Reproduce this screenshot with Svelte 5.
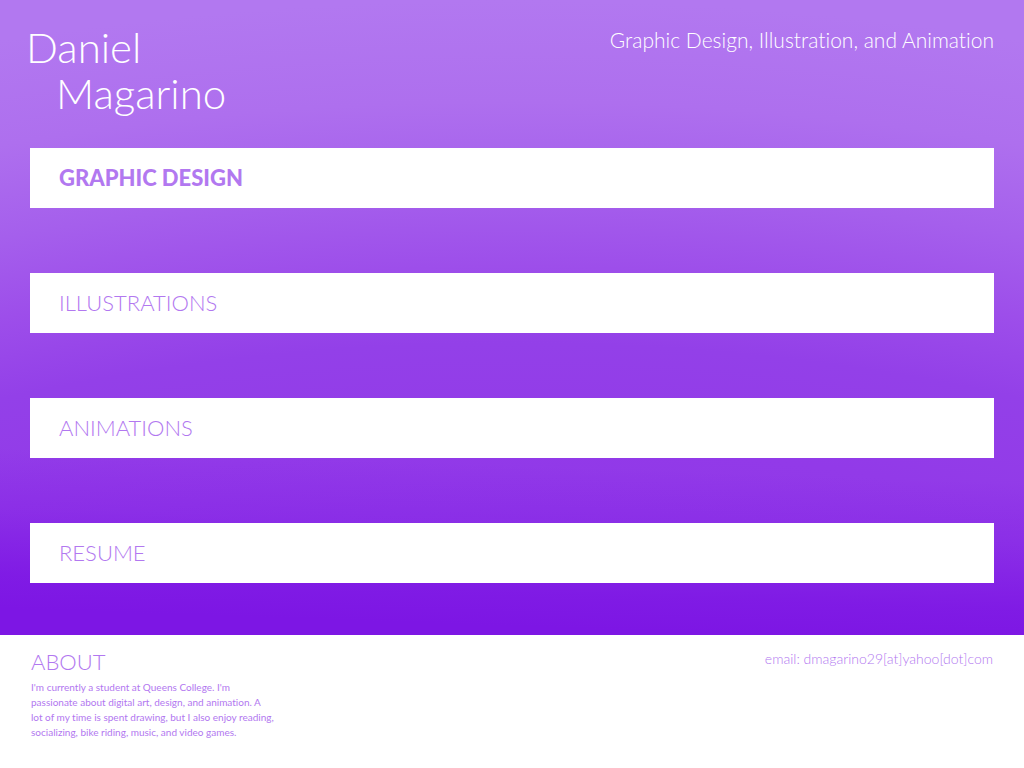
<script>
  const sections = [
    { id: 'graphic-design', label: 'GRAPHIC DESIGN', active: true },
    { id: 'illustrations', label: 'ILLUSTRATIONS', active: false },
    { id: 'animations', label: 'ANIMATIONS', active: false },
    { id: 'resume', label: 'RESUME', active: false }
  ];
</script>

<div class="page">
  <div class="hero">
    <header>
      <h1><span>Daniel</span><span class="last">Magarino</span></h1>
      <p class="tagline">Graphic Design, Illustration, and Animation</p>
    </header>
    <nav aria-label="Portfolio">
      {#each sections as s (s.id)}
        <a href="#{s.id}" class:active={s.active}>{s.label}</a>
      {/each}
    </nav>
  </div>
  <footer>
    <section class="about">
      <h2>ABOUT</h2>
      <p>
        I'm currently a student at Queens College. I'm<br />
        passionate about digital art, design, and animation. A<br />
        lot of my time is spent drawing, but I also enjoy reading,<br />
        socializing, bike riding, music, and video games.
      </p>
    </section>
    <p class="email">email: dmagarino29[at]yahoo[dot]com</p>
  </footer>
</div>

<style>
  :global(body) {
    margin: 0;
    background: #fff;
  }
  .page {
    font-family: Lato, "Open Sans", sans-serif;
    font-weight: 300;
    font-variant-ligatures: none;
    color: #b278f0;
  }
  h1, h2, p {
    margin: 0;
    font-weight: inherit;
  }
  .hero {
    padding: 24px 30px 52px;
    background:
      linear-gradient(182deg, #7d16e400 72%, #7d16e44d 81%, #7d16e4d9 91%, #7d16e4 96%),
      radial-gradient(ellipse 200% 200% at 50% 200%,
      #8e36e8 55%, #923ae8 65%, #9340e8 73%,
      #9d4eea 79%, #a55fec 85%, #ae6fee 92%, #b278f0 100%);
  }
  header {
    display: flex;
    justify-content: space-between;
    align-items: flex-start;
    color: #fff;
  }
  h1 {
    margin-left: -4px;
    font-size: 42px;
    line-height: 46px;
  }
  h1 span {
    display: block;
  }
  h1 .last {
    padding-left: 30px;
  }
  .tagline {
    font-size: 21px;
    line-height: 32px;
  }
  nav {
    display: grid;
    gap: 65px;
    margin-top: 32px;
  }
  nav a {
    padding: 0 29px;
    font-size: 22px;
    line-height: 60px;
    color: inherit;
    text-decoration: none;
    background: #fff;
  }
  nav a.active {
    font-weight: 900;
  }
  footer {
    display: flex;
    justify-content: space-between;
    padding: 11px 31px 26px;
  }
  h2 {
    font-size: 22px;
    line-height: 32px;
  }
  .about p {
    margin-top: 2px;
    font-size: 10px;
    font-weight: 400;
    line-height: 15px;
  }
  .email {
    font-size: 14px;
    line-height: 26px;
  }
</style>
